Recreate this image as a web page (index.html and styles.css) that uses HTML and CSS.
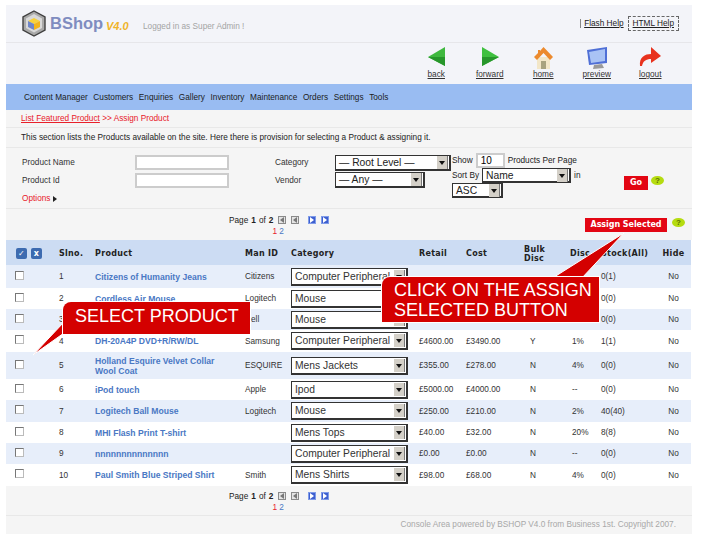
FILE: index.html
```html
<!DOCTYPE html>
<html>

<head>
  <meta charset="utf-8">
  <title>BShop V4.0</title>
  <link rel="stylesheet" href="styles.css">
</head>

<body>
  <div class="page">
    <div class="topBar">
      <svg class="logo" width="24" height="27" viewBox="0 0 24 27">
        <path d="M12 1 L23 7 V20 L12 26 L1 20 V7 Z" fill="#a9a9a9" stroke="#3f3f3f" stroke-width="1.4"/>
        <path d="M12 4 L20 8.500 V18 L12 22.500 L4 18 V8.500 Z" fill="#d9d9d9"/>
        <path d="M12 8 L18 11 L12 14 L6 11 Z" fill="#f7d13c"/>
        <path d="M6 11 L12 14 V20 L6 17 Z" fill="#6f86c9"/>
        <path d="M18 11 L12 14 V20 L18 17 Z" fill="#f2b41c"/>
      </svg>
      <span class="brand">BShop</span>
      <span class="version">V4.0</span>
      <span class="logged">Logged in as Super Admin !</span>
      <div class="helpLinks">
        <a href="#" class="flashHelp">Flash Help</a>
        <a href="#" class="htmlHelp">HTML Help</a>
      </div>
    </div>

    <div class="iconBar">
      <a href="#" class="iconLink">
        <svg width="24" height="24" viewBox="0 0 24 24">
          <path d="M4 11 L21 1 V20 Z" fill="#3fb83f"/>
          <path d="M4 11 L21 11 V20 Z" fill="#27962b"/>
        </svg>
        back
      </a>
      <a href="#" class="iconLink">
        <svg width="24" height="24" viewBox="0 0 24 24">
          <path d="M21 11 L4 1 V20 Z" fill="#3fc03f"/>
          <path d="M21 11 L4 11 V20 Z" fill="#27962b"/>
        </svg>
        forward
      </a>
      <a href="#" class="iconLink">
        <svg width="24" height="24" viewBox="0 0 24 24">
          <path d="M6 11 H19 V23 H6 Z" fill="#f2e6c8"/>
          <path d="M10 15 H15 V23 H10 Z" fill="#a8a27f"/>
          <path d="M12.500 1 L22 11 L19 14 L12.500 7 L6 14 L3 11 L7 7 V4 H9 V5 Z" fill="#ec8a2e"/>
        </svg>
        home
      </a>
      <a href="#" class="iconLink">
        <svg width="24" height="24" viewBox="0 0 24 24">
          <path d="M2 4 L22 1 V17 L4 19 Z" fill="#4f6fd6"/>
          <path d="M4 6 L20 3 V15 L6 17 Z" fill="#a9c3f5"/>
          <path d="M9 19 L17 18 L19 22 L8 23 Z" fill="#9a9a9a"/>
        </svg>
        preview
      </a>
      <a href="#" class="iconLink">
        <svg width="24" height="24" viewBox="0 0 24 24">
          <path d="M2 20 C1 11 7 8 13 8 V1 L23 10 L13 17 V13 C8 13 5 15 4 20 Z" fill="#e8321e"/>
        </svg>
        logout
      </a>
    </div>

    <div class="navBar">
      <a href="#">Content Manager</a>
      <a href="#">Customers</a>
      <a href="#">Enquiries</a>
      <a href="#">Gallery</a>
      <a href="#">Inventory</a>
      <a href="#">Maintenance</a>
      <a href="#">Orders</a>
      <a href="#">Settings</a>
      <a href="#">Tools</a>
    </div>

    <div class="crumbs"><a href="#">List Featured Product</a> &gt;&gt; Assign Product</div>
    <div class="intro">This section lists the Products available on the site. Here there is provision for selecting a Product &amp; assigning it.</div>

    <div class="filters">
      <div class="fieldCol">
        <div class="field"><label>Product Name</label><input type="text"></div>
        <div class="field"><label>Product Id</label><input type="text"></div>
        <div class="options">Options <span class="optArrow"></span></div>
      </div>
      <div class="selectCol">
        <div class="field"><label>Category</label><div class="sel rootSel"><span>— Root Level —</span><i></i></div></div>
        <div class="field"><label>Vendor</label><div class="sel vendorSel"><span>— Any —</span><i></i></div></div>
      </div>
      <div class="showCol">
        <div class="showRow">Show <input type="text" value="10"> Products Per Page</div>
        <div class="showRow">Sort By <div class="sel nameSel"><span>Name</span><i></i></div> in</div>
        <div class="sel ascSel"><span>ASC</span><i></i></div>
      </div>
      <div class="goCol">
        <a href="#" class="redBtn">Go</a>
        <span class="helpDot">?</span>
      </div>
    </div>

    <div class="pagerBar">
      <div class="pager">
        <div class="pagerLine">Page <b>1</b> of <b>2</b>
          <i class="pg off"></i><i class="pg off"></i><i class="pg on gap"></i><i class="pg on"></i>
        </div>
        <div class="pagerNums"><span>1</span> <a href="#">2</a></div>
      </div>
      <div class="assign">
        <a href="#" class="redBtn assignBtn">Assign Selected</a>
        <span class="helpDot">?</span>
      </div>
    </div>

    <table class="products">
      <colgroup>
        <col class="cCheck"><col class="cNo"><col class="cProduct"><col class="cMan"><col class="cCat">
        <col class="cRetail"><col class="cCost"><col class="cBulk"><col class="cDisc"><col class="cStock"><col class="cHide">
      </colgroup>
      <thead>
        <tr>
          <th><i class="tick">✓</i><i class="tick">x</i></th>
          <th>Slno.</th><th>Product</th><th>Man ID</th><th>Category</th><th>Retail</th><th>Cost</th>
          <th>Bulk<br>Disc</th><th>Disc</th><th>Stock(All)</th><th>Hide</th>
        </tr>
      </thead>
      <tbody>
        <tr class="r23"><td><i class="box"></i></td><td>1</td><td><a href="#">Citizens of Humanity Jeans</a></td><td>Citizens</td><td><div class="sel"><span>Computer Peripheral</span><i></i></div></td><td></td><td></td><td></td><td></td><td>0(1)</td><td>No</td></tr>
        <tr><td><i class="box"></i></td><td>2</td><td><a href="#">Cordless Air Mouse</a></td><td>Logitech</td><td><div class="sel"><span>Mouse</span><i></i></div></td><td></td><td></td><td></td><td></td><td>0(0)</td><td>No</td></tr>
        <tr><td><i class="box"></i></td><td>3</td><td></td><td>Dell</td><td><div class="sel"><span>Mouse</span><i></i></div></td><td></td><td></td><td></td><td></td><td>0(0)</td><td>No</td></tr>
        <tr class="r22"><td><i class="box"></i></td><td>4</td><td><a href="#">DH-20A4P DVD+R/RW/DL</a></td><td>Samsung</td><td><div class="sel"><span>Computer Peripheral</span><i></i></div></td><td>£4600.00</td><td>£3490.00</td><td>Y</td><td>1%</td><td>1(1)</td><td>No</td></tr>
        <tr class="r27"><td><i class="box"></i></td><td>5</td><td><a href="#">Holland Esquire Velvet Collar<br>Wool Coat</a></td><td>ESQUIRE</td><td><div class="sel"><span>Mens Jackets</span><i></i></div></td><td>£355.00</td><td>£278.00</td><td>N</td><td>4%</td><td>0(0)</td><td>No</td></tr>
        <tr><td><i class="box"></i></td><td>6</td><td><a href="#">iPod touch</a></td><td>Apple</td><td><div class="sel"><span>Ipod</span><i></i></div></td><td>£5000.00</td><td>£4000.00</td><td>N</td><td>--</td><td>0(0)</td><td>No</td></tr>
        <tr class="r22"><td><i class="box"></i></td><td>7</td><td><a href="#">Logitech Ball Mouse</a></td><td>Logitech</td><td><div class="sel"><span>Mouse</span><i></i></div></td><td>£250.00</td><td>£210.00</td><td>N</td><td>2%</td><td>40(40)</td><td>No</td></tr>
        <tr><td><i class="box"></i></td><td>8</td><td><a href="#">MHI Flash Print T-shirt</a></td><td></td><td><div class="sel"><span>Mens Tops</span><i></i></div></td><td>£40.00</td><td>£32.00</td><td>N</td><td>20%</td><td>8(8)</td><td>No</td></tr>
        <tr><td><i class="box"></i></td><td>9</td><td><a href="#">nnnnnnnnnnnnnn</a></td><td></td><td><div class="sel"><span>Computer Peripheral</span><i></i></div></td><td>£0.00</td><td>£0.00</td><td>N</td><td>--</td><td>0(0)</td><td>No</td></tr>
        <tr class="r22"><td><i class="box"></i></td><td>10</td><td><a href="#">Paul Smith Blue Striped Shirt</a></td><td>Smith</td><td><div class="sel"><span>Mens Shirts</span><i></i></div></td><td>£98.00</td><td>£68.00</td><td>N</td><td>4%</td><td>0(0)</td><td>No</td></tr>
      </tbody>
    </table>

    <div class="pagerBar bottomPager">
      <div class="pager">
        <div class="pagerLine">Page <b>1</b> of <b>2</b>
          <i class="pg off"></i><i class="pg off"></i><i class="pg on gap"></i><i class="pg on"></i>
        </div>
        <div class="pagerNums"><span>1</span> <a href="#">2</a></div>
      </div>
    </div>

    <div class="footer">Console Area powered by BSHOP V4.0 from Business 1st. Copyright 2007.</div>

    <!-- callouts sit over the table -->
    <svg class="tails" width="702" height="535" viewBox="0 0 702 535">
      <path d="M64 322 L33 355 L64 333 Z" fill="#d40000" stroke="#fff" stroke-width="1"/>
      <path d="M551 279 L624 233 L581 279 Z" fill="#d40000" stroke="#fff" stroke-width="1"/>
    </svg>
    <div class="callout selectCall">SELECT PRODUCT</div>
    <div class="callout assignCall">CLICK ON THE ASSIGN<br>SELECTED BUTTON</div>
  </div>
</body>

</html>
```

FILE: styles.css
```css
html,
body {
  margin: 0;
  padding: 0;
  background-color: #fff;
  font-family: "Liberation Sans", Arial, sans-serif;
  font-size: 8.25px;
  color: #222;
}

a {
  color: inherit;
}

.page {
  width: 686px;
  margin: 5px 0 0 6px;
}

.topBar {
  height: 37px;
  background-color: #f3f4f9;
  border-bottom: 1px solid #e6e6ea;
  display: flex;
  align-items: center;
  padding-left: 16px;
}

.logo {
  margin-right: 4px;
}

.brand {
  font-size: 16.5px;
  font-weight: bold;
  color: #7f8cc0;
  width: 56px;
}

.version {
  font-size: 11px;
  font-weight: bold;
  font-style: italic;
  color: #f0b429;
  width: 37px;
  padding-top: 5px;
}

.logged {
  color: #a4a4a4;
  padding-top: 5px;
}

.helpLinks {
  margin-left: auto;
  margin-right: 13px;
  display: flex;
  align-items: center;
  margin-top: -1px;
}

.flashHelp {
  border-left: 1px solid #888;
  padding-left: 3px;
  margin-right: 4px;
}

.htmlHelp {
  border: 1px dashed #666;
  padding: 2px 4px;
}

.iconBar {
  height: 41px;
  background-color: #f3f4f9;
  display: flex;
  justify-content: flex-end;
  padding-right: 15px;
}

.iconLink {
  width: 53.5px;
  display: flex;
  flex-direction: column;
  align-items: center;
  color: #333;
  padding-top: 3px;
  line-height: 10px;
}

.navBar {
  height: 26px;
  background-color: #99bcf2;
  display: flex;
  align-items: center;
  gap: 5.6px;
  padding-left: 18px;
}

.navBar a {
  text-decoration: none;
  color: #1c1c1c;
}

.crumbs {
  height: 18px;
  line-height: 18px;
  padding-left: 15px;
  background-color: #f5f5f5;
  border-bottom: 1px solid #e8e8e8;
  color: #e8202a;
  box-sizing: border-box;
}

.intro {
  height: 20px;
  line-height: 20px;
  padding-left: 15px;
  background-color: #f5f5f5;
  border-bottom: 1px solid #e8e8e8;
  box-sizing: border-box;
}

.filters {
  height: 61px;
  background-color: #f5f5f5;
  border-bottom: 1px solid #e8e8e8;
  box-sizing: border-box;
  display: flex;
  position: relative;
  padding: 5px 0 0 16px;
}

.filters input,
.showRow input {
  box-sizing: border-box;
  border: 2px solid #ccc;
  background-color: #fff;
  font: 10px "Liberation Sans", Arial, sans-serif;
  padding: 0 3px;
  margin: 0;
}

.field {
  display: flex;
  align-items: center;
  height: 17.5px;
}

.fieldCol {
  width: 253px;
  padding-top: 1px;
}

.fieldCol label {
  width: 113px;
  color: #333;
}

.fieldCol input {
  width: 94px;
  height: 15px;
}

.options {
  color: #e8202a;
  margin-top: 5px;
  display: flex;
  align-items: center;
  gap: 3px;
}

.optArrow {
  border-left: 4px solid #222;
  border-top: 3px solid transparent;
  border-bottom: 3px solid transparent;
}

.selectCol {
  width: 177px;
  padding-top: 1px;
}

.selectCol label {
  width: 60px;
  color: #333;
}

.showCol {
  width: 172px;
}

.showRow {
  display: flex;
  align-items: center;
  gap: 3px;
  height: 15px;
}

.showRow input {
  width: 29px;
  height: 15px;
}

.goCol {
  display: flex;
  align-items: center;
  gap: 3px;
  align-self: flex-start;
  margin-top: 23px;
}

.sel {
  box-sizing: border-box;
  width: 117px;
  height: 18px;
  display: flex;
  align-items: center;
  justify-content: space-between;
  background-color: #fff;
  border: 1px solid #333;
  border-right-width: 2px;
  border-bottom-width: 2px;
  font-size: 10.3px;
  padding-left: 3px;
  white-space: nowrap;
}

.sel i {
  flex: none;
  position: relative;
  width: 10px;
  height: 13px;
  margin-right: 1px;
  background-color: #d4d0c8;
  border-right: 1px solid #777;
}

.sel i::after {
  content: "";
  position: absolute;
  left: 2px;
  top: 5px;
  border-top: 4px solid #111;
  border-left: 3px solid transparent;
  border-right: 3px solid transparent;
}

.rootSel {
  width: 116px;
  height: 16px;
}

.vendorSel {
  width: 90px;
  height: 16px;
}

.nameSel {
  width: 89px;
  height: 15px;
}

.ascSel {
  width: 51px;
  height: 15px;
}

.redBtn {
  display: inline-block;
  background-color: #e30613;
  color: #fff;
  font-family: "DejaVu Sans", sans-serif;
  font-size: 8px;
  font-weight: bold;
  text-decoration: none;
  line-height: 14px;
  padding: 0 6px;
}

.assignBtn {
  width: 82px;
  padding: 0;
  text-align: center;
  white-space: nowrap;
  letter-spacing: -0.05px;
}

.helpDot {
  display: inline-block;
  width: 13px;
  height: 9px;
  line-height: 9px;
  border-radius: 50%;
  background-color: #b5dc10;
  color: #5a7000;
  font-size: 8px;
  font-weight: bold;
  text-align: center;
  margin-top: -5px;
}

.pagerBar {
  height: 31px;
  background-color: #f5f5f5;
  display: flex;
  position: relative;
}

.pager {
  margin-left: 223px;
  padding-top: 5px;
}

.pagerLine {
  display: flex;
  align-items: center;
  gap: 3px;
  height: 12px;
}

.pg {
  position: relative;
  display: inline-block;
  width: 8px;
  height: 8px;
  margin-left: 2px;
  box-sizing: border-box;
}

.pg::after {
  content: "";
  position: absolute;
  left: 1px;
  top: 0;
  border-top: 3px solid transparent;
  border-bottom: 3px solid transparent;
}

.pg.off {
  background-color: #e4e4e4;
  border: 1px solid #8a8a8a;
}

.pg.off::after {
  border-right: 4px solid #777;
}

.pg.on {
  background-color: #3d5fd0;
  border: 1px solid #7f9be8;
}

.pg.on::after {
  border-left: 4px solid #fff;
}

.pg.gap {
  margin-left: 6px;
}

.pagerNums {
  text-align: center;
  padding-right: 2px;
  margin-top: 1px;
}

.pagerNums span {
  color: #e8202a;
}

.pagerNums a {
  color: #4a78c4;
  text-decoration: none;
}

.assign {
  position: absolute;
  left: 579px;
  top: 9px;
  display: flex;
  align-items: center;
  gap: 5px;
}

.products {
  width: 685px;
  table-layout: fixed;
  border-collapse: collapse;
}

.products th {
  height: 25px;
  padding: 2px 0 0 1px;
  box-sizing: border-box;
  background-color: #ccdcf3;
  font-family: "DejaVu Sans", sans-serif;
  font-size: 8px;
  letter-spacing: 0.3px;
  text-align: left;
  color: #222;
}

.products td {
  height: 21px;
  padding: 0 0 0 1px;
  color: #333;
}

.products td a {
  color: #4a78c4;
  font-size: 8.6px;
  font-weight: bold;
  text-decoration: none;
}

.products th:last-child,
.products td:last-child {
  text-align: center;
  padding-right: 5px;
}

.products td:nth-child(8) {
  padding-left: 7px;
}

.products td:nth-child(9) {
  padding-left: 3px;
}

.products tbody tr:nth-child(odd) {
  background-color: #e7eefa;
}

.products .r22 td {
  height: 22px;
}

.products .r23 td {
  height: 23px;
}

.products .r27 td {
  height: 27px;
}

.cCheck {
  width: 52px;
}

.cNo {
  width: 36px;
}

.cProduct {
  width: 150px;
}

.cMan {
  width: 46px;
}

.cCat {
  width: 128px;
}

.cRetail {
  width: 47px;
}

.cCost {
  width: 58px;
}

.cBulk {
  width: 46px;
}

.cDisc {
  width: 31px;
}

.cStock {
  width: 60px;
}

.cHide {
  width: 31px;
}

.tick {
  display: inline-block;
  width: 11px;
  height: 11px;
  line-height: 11px;
  margin-left: 9px;
  margin-right: -5px;
  border-radius: 2px;
  background-color: #3d6bb0;
  color: #fff;
  text-align: center;
  font-style: normal;
}

.box {
  display: block;
  box-sizing: border-box;
  width: 9px;
  height: 9px;
  margin: -3px 0 0 8px;
  background-color: #fff;
  border: 1px solid #777;
  border-right-color: #bbb;
  border-bottom-color: #bbb;
}

.bottomPager {
  height: 29px;
  border-bottom: 1px solid #e8e8e8;
}

.bottomPager .pager {
  padding-top: 4px;
}

.footer {
  height: 18px;
  line-height: 18px;
  background-color: #f5f5f5;
  color: #a8a8a8;
  text-align: right;
  padding-right: 16px;
}

/* callouts */
.tails {
  position: absolute;
  left: 0;
  top: 0;
  pointer-events: none;
}

.callout {
  position: absolute;
  background-color: #d40000;
  color: #fff;
  font-size: 18px;
  box-shadow: 0 0 0 1px #fff;
  box-sizing: border-box;
  border-top-left-radius: 8px;
}

.selectCall {
  left: 63px;
  top: 302px;
  width: 187px;
  height: 32px;
  line-height: 28px;
  padding-left: 12px;
}

.assignCall {
  left: 382px;
  top: 277px;
  width: 217px;
  height: 45px;
  line-height: 19.5px;
  padding: 4px 0 0 12px;
}
```
